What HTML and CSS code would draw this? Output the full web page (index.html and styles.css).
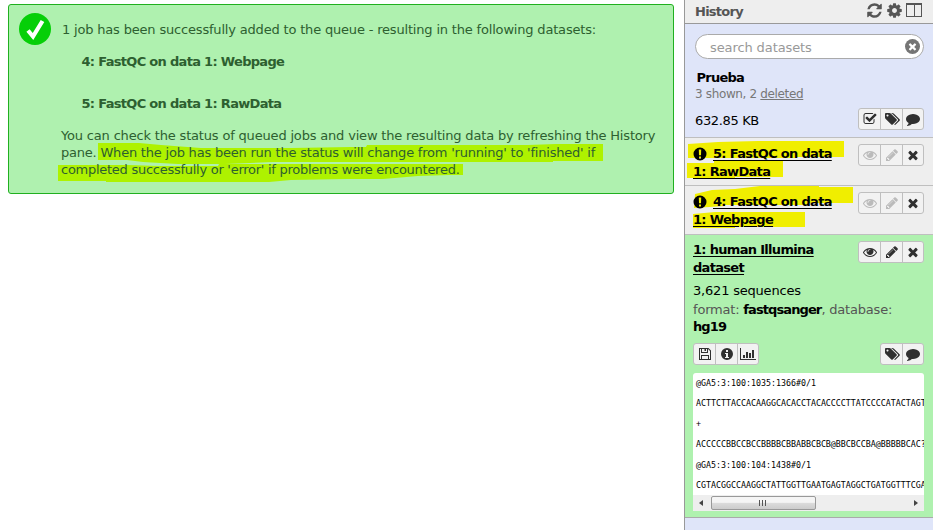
FILE: index.html
```html
<!DOCTYPE html>
<html lang="en">
<head>
<meta charset="utf-8">
<title>History</title>
<link rel="stylesheet" href="styles.css">
</head>
<body>
<svg class="defs" aria-hidden="true">
<symbol id="times" viewBox="0 0 1792 1792"><path d="M1490 1322q0 40-28 68l-136 136q-28 28-68 28t-68-28l-294-294-294 294q-28 28-68 28t-68-28l-136-136q-28-28-28-68t28-68l294-294-294-294q-28-28-28-68t28-68l136-136q28-28 68-28t68 28l294 294 294-294q28-28 68-28t68 28l136 136q28 28 28 68t-28 68l-294 294 294 294q28 28 28 68z"/></symbol>
<symbol id="eye" viewBox="0 0 1792 1792"><path d="M1664 960q-152-236-381-353 61 104 61 225 0 185-131.500 316.500t-316.500 131.500-316.500-131.500-131.500-316.500q0-121 61-225-229 117-381 353 133 205 333.500 326.500t434.500 121.500 434.500-121.500 333.500-326.500zm-720-384q0-20-14-34t-34-14q-125 0-214.500 89.500t-89.500 214.500q0 20 14 34t34 14 34-14 14-34q0-86 61-147t147-61q20 0 34-14t14-34zm848 384q0 34-20 69-140 230-376.500 368.500t-499.500 138.500-499.500-139-376.500-368q-20-35-20-69t20-69q140-229 376.500-368t499.500-139 499.500 139 376.500 368q20 35 20 69z"/></symbol>
<symbol id="pencil" viewBox="0 0 1792 1792"><path d="M491 1536l91-91-235-235-91 91v107h128v128h107zm523-928q0-22-22-22-10 0-17 7l-542 542q-7 7-7 17 0 22 22 22 10 0 17-7l542-542q7-7 7-17zm-54-192l416 416-832 832h-416v-416zm683 96q0 53-37 90l-166 166-416-416 166-165q36-38 90-38 53 0 91 38l235 234q37 39 37 91z"/></symbol>
<symbol id="comment" viewBox="0 0 1792 1792"><path d="M1792 896q0 174-120 321.500t-326 233-450 85.500q-70 0-145-8-198 175-460 242-49 14-114 22-17 2-30.500-9t-17.500-29v-1q-3-4-.5-12t2-10 4.500-9.500l6-9 7-8.500 8-9q7-8 31-34.500t34.500-38 31-39.500 32.500-51 27-59 26-76q-157-89-247.500-220t-90.500-281q0-130 71-248.500t191-204.500 286-136.500 348-50.500q244 0 450 85.500t326 233 120 321.500z"/></symbol>
<symbol id="tags" viewBox="0 0 2048 1792"><path d="M576 448q0-53-37.500-90.500t-90.500-37.500-90.500 37.500-37.500 90.500 37.500 90.500 90.500 37.500 90.500-37.500 37.500-90.500zm1067 576q0 53-37 90l-491 492q-39 37-91 37-53 0-90-37l-715-716q-38-37-64.500-101t-26.500-117v-416q0-52 38-90t90-38h416q53 0 117 26.500t102 64.500l715 714q37 39 37 91zm384 0q0 53-37 90l-491 492q-39 37-91 37-36 0-59-14t-53-45l470-470q37-37 37-90 0-52-37-91l-715-714q-38-38-102-64.500t-117-26.500h224q53 0 117 26.500t102 64.500l715 714q37 39 37 91z"/></symbol>
<symbol id="check" viewBox="0 0 1792 1792"><path d="M1472 930v318q0 119-84.500 203.500t-203.500 84.500h-832q-119 0-203.500-84.500t-84.500-203.500v-832q0-119 84.500-203.500t203.500-84.500h832q63 0 117 25 15 7 18 23 3 17-9 29l-49 49q-10 10-23 10-3 0-9-2-23-6-45-6h-832q-66 0-113 47t-47 113v832q0 66 47 113t113 47h832q66 0 113-47t47-113v-254q0-13 9-22l64-64q10-10 23-10 6 0 12 3 20 8 20 29zm231-489l-814 814q-24 24-57 24t-57-24l-430-430q-24-24-24-57t24-57l110-110q24-24 57-24t57 24l263 263 647-647q24-24 57-24t57 24l110 110q24 24 24 57t-24 57z"/></symbol>
<symbol id="refresh" viewBox="0 0 1792 1792"><path d="M1639 1056q0 5-1 7-64 268-268 434.500t-478 166.500q-146 0-282.500-55t-243.500-157l-129 129q-19 19-45 19t-45-19-19-45v-448q0-26 19-45t45-19h448q26 0 45 19t19 45-19 45l-137 137q71 66 161 102t187 36q134 0 250-65t186-179q11-17 53-117 8-23 30-23h192q13 0 22.500 9.500t9.500 22.500zm25-800v448q0 26-19 45t-45 19h-448q-26 0-45-19t-19-45 19-45l138-138q-148-137-349-137-134 0-250 65t-186 179q-11 17-53 117-8 23-30 23h-199q-13 0-22.500-9.500t-9.500-22.500v-7q65-268 270-434.500t480-166.500q146 0 284 55.500t245 156.500l130-129q19-19 45-19t45 19 19 45z"/></symbol>
<symbol id="cog" viewBox="0 0 1792 1792"><path d="M1152 896q0-106-75-181t-181-75-181 75-75 181 75 181 181 75 181-75 75-181zm512-109v222q0 12-8 23t-20 13l-185 28q-19 54-39 91 35 50 107 138 10 12 10 25t-9 23q-27 37-99 108t-94 71q-12 0-26-9l-138-108q-44 23-91 38-16 136-29 186-7 28-36 28h-222q-14 0-24.500-8.500t-11.500-21.500l-28-184q-49-16-90-37l-141 107q-10 9-25 9-14 0-25-11-126-114-165-168-7-10-7-23 0-12 8-23 15-21 51-66.500t54-70.500q-27-50-41-99l-183-27q-13-2-21-12.500t-8-23.500v-222q0-12 8-23t19-13l186-28q14-46 39-92-40-57-107-138-10-12-10-24 0-10 9-23 26-36 98.500-107.500t94.500-71.500q13 0 26 10l138 107q44-23 91-38 16-136 29-186 7-28 36-28h222q14 0 24.500 8.500t11.500 21.500l28 184q49 16 90 37l142-107q9-9 24-9 13 0 25 10 129 119 165 170 7 8 7 22 0 12-8 23-15 21-51 66.500t-54 70.500q26 50 41 98l183 28q13 2 21 12.500t8 23.500z"/></symbol>
<symbol id="save" viewBox="0 0 14 14"><path fill-rule="evenodd" d="M1 1h9.500L13 3.500V13H1zM2 2v10h1V8h8v4h1V4l-2-2v4H3V2zm2 0v3h5V2H8v2H6.500V2zM4 9v3h6V9z"/></symbol>
<symbol id="info" viewBox="0 0 14 14"><path fill-rule="evenodd" d="M7 1a6 6 0 1 0 0 12A6 6 0 0 0 7 1zM6 3h2v2H6zM5 6h3v4h1v1H5v-1h1V7H5z"/></symbol>
<symbol id="chart" viewBox="0 0 16 14"><path d="M0 1h1v11h15v1H0zM3 8h2v3H3zM6 5h2v6H6zM9 6h2v5H9zM12 3h2v8h-2z"/></symbol>
<symbol id="alert" viewBox="0 0 14 14"><path fill-rule="evenodd" d="M7 .5a6.500 6.500 0 1 0 0 13A6.500 6.500 0 0 0 7 .5zM5.800 2.500h2.400L8 8.300H6zM6 9.500h2v2H6z"/></symbol>
</svg>

<div class="app">
<main class="center">
  <section class="message">
    <svg class="marker" viewBox="0 0 664 188" aria-hidden="true"><path d="M89 138h41l22 2 40 3h90l60-1h15l1-2h161l28-1h47v17h-50v1H264l-48 2h-47l-35-2-16-2H89z"/><path d="M49 160h70l30 1h60l1-2h244v11h-14l-31 1-35 3h-36l-56 1-22 2H97v-1H49z"/></svg>
    <svg class="done" viewBox="0 0 32 32" aria-hidden="true"><circle cx="16" cy="16" r="16"/><path d="M9 17.500l5 6L23.500 8"/></svg>
    <div class="body">
      <p class="first">1 job has been successfully added to the queue - resulting in the following datasets:</p>
      <p class="out one">4: FastQC on data 1: Webpage</p>
      <p class="out two">5: FastQC on data 1: RawData</p>
      <p class="note"><span class="l1">You can check the status of queued jobs and view the resulting data by refreshing the History</span><br><span class="l2">pane. When the job has been run the status will change from 'running' to 'finished' if</span><br><span class="l3">completed successfully or 'error' if problems were encountered.</span></p>
    </div>
  </section>
</main>

<aside class="history">
  <header class="bar">
    <h1>History</h1>
    <div class="tools"><svg><use href="#refresh"/></svg><svg><use href="#cog"/></svg><i class="columns"></i></div>
  </header>
  <section class="controls">
    <div class="search"><span>search datasets</span><i class="clear"><svg><use href="#times"/></svg></i></div>
    <h2>Prueba</h2>
    <div class="counts">3 shown, 2 <u>deleted</u></div>
    <div class="sizeline"><span>632.85 KB</span>
      <div class="btns"><b><svg><use href="#check"/></svg></b><b><svg class="wide"><use href="#tags"/></svg></b><b><svg><use href="#comment"/></svg></b></div>
    </div>
  </section>

  <section class="item queued q5">
    <svg class="marker" viewBox="0 0 248 48" aria-hidden="true"><path d="M3 6l30-2 40-1h86v16H112v1H3z"/><path d="M2 25h27v-2h69v16H50v1H2z"/></svg>
    <div class="title"><svg class="alert"><use href="#alert"/></svg><u>5: FastQC on data</u><br><u>1: RawData</u></div>
    <div class="btns"><b class="off"><svg><use href="#eye"/></svg></b><b class="off"><svg><use href="#pencil"/></svg></b><b><svg><use href="#times"/></svg></b></div>
  </section>
  <section class="item queued q4">
    <svg class="marker" viewBox="0 0 248 48" aria-hidden="true"><path d="M10 8l17-4 23-1 25-3h59v1h34v16h-46v2H40v1l-31 2z"/><path d="M8 28l22-2h90v15H50v1H8z"/></svg>
    <div class="title"><svg class="alert"><use href="#alert"/></svg><u>4: FastQC on data</u><br><u>1: Webpage</u></div>
    <div class="btns"><b class="off"><svg><use href="#eye"/></svg></b><b class="off"><svg><use href="#pencil"/></svg></b><b><svg><use href="#times"/></svg></b></div>
  </section>

  <section class="ready">
    <div class="item">
      <div class="title"><u>1: human Illumina</u><br><u>dataset</u></div>
      <div class="btns"><b><svg><use href="#eye"/></svg></b><b><svg><use href="#pencil"/></svg></b><b><svg><use href="#times"/></svg></b></div>
    </div>
    <div class="details">
      <p class="seq">3,621 sequences</p>
      <p class="meta">format: <strong>fastqsanger</strong>, database:<br><strong>hg19</strong></p>
      <div class="actions">
        <div class="btns"><b><svg><use href="#save"/></svg></b><b><svg><use href="#info"/></svg></b><b><svg class="wide"><use href="#chart"/></svg></b></div>
        <div class="btns pair"><b><svg class="wide"><use href="#tags"/></svg></b><b><svg><use href="#comment"/></svg></b></div>
      </div>
      <div class="peek">
        <div class="rows">
          <code>@GA5:3:100:1035:1366#0/1</code>
          <code>ACTTCTTACCACAAGGCACACCTACACCCCTTATCCCCATACTAGT</code>
          <code>+</code>
          <code>ACCCCCBBCCBCCBBBBCBBABBCBCB@BBCBCCBA@BBBBBCAC?</code>
          <code>@GA5:3:100:104:1438#0/1</code>
          <code>CGTACGGCCAAGGCTATTGGTTGAATGAGTAGGCTGATGGTTTCGA</code>
        </div>
        <div class="scroll"><i class="left"></i><i class="thumb"></i><i class="right"></i></div>
      </div>
    </div>
  </section>
</aside>
</div>
</body>
</html>
```
FILE: styles.css
```css
* { box-sizing: border-box; }
body { margin: 0; background: #fff; font-family: "DejaVu Sans", Verdana, sans-serif; font-size: 13px; line-height: 17px; letter-spacing: -.2px; color: #000; overflow: hidden; }
h1, h2, p { margin: 0; font-size: 13px; }
h1, h2 { letter-spacing: -.75px; }
i { display: block; }
.defs { position: absolute; width: 0; height: 0; }
.app { display: flex; height: 530px; }
.center { width: 684px; padding: 4px 0 0 8px; }
.message { position: relative; isolation: isolate; display: flex; width: 666px; height: 190px; padding: 8px 0 0 10px; border: 1px solid #20b01f; border-radius: 3px; background: #aff1af; color: #2d6030; white-space: nowrap; }
.marker { position: absolute; left: 0; top: 0; z-index: -1; }
.message .marker { width: 664px; height: 188px; fill: #aef200; }
.done { width: 32px; height: 32px; flex: none; fill: #06cf08; }
.done path { fill: none; stroke: #fff; stroke-width: 4.2; }
.body { padding: 8px 0 0 10px; }
.first { padding-left: 1px; letter-spacing: -.18px; }
.out { padding-left: 20.500px; font-weight: bold; letter-spacing: -.69px; }
.one { margin-top: 15px; }
.two { margin-top: 25px; margin-bottom: 15px; }
.l1 { letter-spacing: -.175px; }
.l2 { letter-spacing: -.21px; }
.l3 { letter-spacing: -.265px; }

.history { width: 249px; border-left: 1px solid #999; background: #dfe5f9; white-space: nowrap; }
.bar { display: flex; justify-content: space-between; height: 24px; padding: 3px 11px 0 10px; border-bottom: 1px solid #999; background: #eee; color: #555; }
.bar svg { width: 17px; height: 17px; fill: #555; }
.tools { display: flex; gap: 3px; margin-top: -1px; }
.columns { width: 16px; height: 14px; margin: 1px 0 0 0; border: 1px solid #555; border-top-width: 2px; background: linear-gradient(#555, #555) center / 1px 100% no-repeat; }
.controls { height: 114px; padding: 10px 9px 0 10px; border-bottom: 1px solid #bfbfbf; }
.search { display: flex; justify-content: space-between; align-items: center; height: 25px; padding: 1px 3px 0 14px; border: 1px solid #aaa; border-radius: 13px; background: #fff; color: #999; letter-spacing: -.1px; }
.clear { width: 15px; height: 15px; margin-top: -1px; border-radius: 50%; background: #757575; }
.clear svg { display: block; width: 11px; height: 11px; margin: 2px; fill: #fff; }
.controls h2 { margin: 10px 0 0 1.500px; }
.counts { font-size: 12px; color: #777; letter-spacing: -.35px; }
.sizeline { display: flex; justify-content: space-between; margin-top: 5px; }
.sizeline > span { padding-top: 4px; letter-spacing: -.35px; }
.btns { display: flex; flex: none; width: 66px; height: 22px; border: 1px solid #bfbfbf; border-radius: 3px; background: #f2f2f2; }
.btns b { display: flex; align-items: center; justify-content: center; width: 22px; border-left: 1px solid #bfbfbf; }
.btns b:first-child { width: 21px; border-left: 0; }
.btns b:last-child { width: 21px; }
.btns.pair { width: 44px; }
.btns svg { flex: none; width: 14px; height: 14px; fill: #303030; }
.btns svg.wide { width: 16px; }
.btns .off svg { fill: #bbb; }
.item { position: relative; isolation: isolate; display: flex; justify-content: space-between; padding: 6px 9px 0 8px; }
.queued { height: 49px; border-bottom: 1px solid #bfbfbf; background: #eee; }
.q5 { height: 48px; }
.queued .marker { width: 248px; height: 48px; fill: #f0ee00; }
.title { font-weight: bold; line-height: 18px; letter-spacing: -.69px; }
.queued .title { padding-top: 1px; }
.title u { text-underline-offset: 2px; }
.alert { width: 14px; height: 14px; margin-right: 6px; vertical-align: -3px; }
.ready { height: 283px; border-bottom: 1px solid #aaa; background: #aff1af; }
.details { padding: 5px 9px 0 8px; }
.meta { margin-top: 2px; color: #555; }
.meta strong { color: #000; letter-spacing: -.9px; }
.actions { display: flex; justify-content: space-between; margin-top: 8px; }
.peek { height: 138px; margin-top: 8px; border-radius: 3px 3px 0 0; overflow: hidden; background: #fff; }
.rows { height: 122px; padding-left: 3px; }
.rows code { display: block; height: 20.400px; font: 8.300px/20.400px "DejaVu Sans Mono", monospace; letter-spacing: 0; }
.scroll { display: flex; align-items: center; height: 16px; padding: 0 6px; background: #eee; }
.thumb { width: 105px; height: 14px; margin-left: 8px; border: 1px solid #999; border-radius: 2px; background: repeating-linear-gradient(90deg, #555 0 1px, transparent 1px 3px) 47px 3px / 8px 6px no-repeat, linear-gradient(#f5f5f5 0 45%, #dcdcdc 50%, #ccc); }
.left, .right { border: 3px solid transparent; }
.left { border-left: 0; border-right: 4px solid #444; }
.right { margin-left: auto; border-right: 0; border-left: 4px solid #444; }
```
